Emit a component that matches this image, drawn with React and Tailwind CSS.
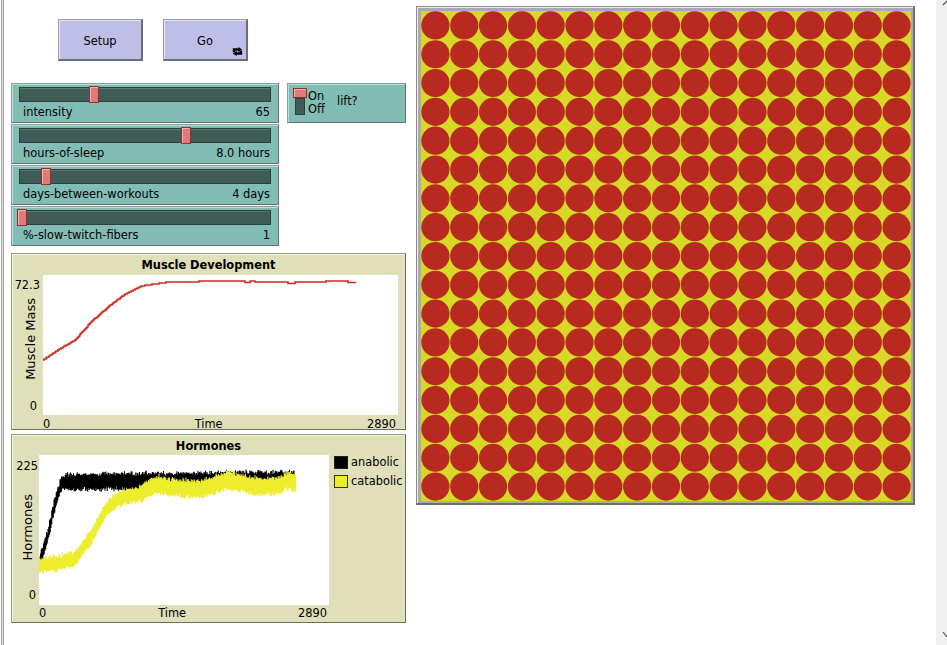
import React from 'react';

const sliders = [
  { name: 'intensity', value: '65', thumb: 'left-[69px]' },
  { name: 'hours-of-sleep', value: '8.0 hours', thumb: 'left-[161px]' },
  { name: 'days-between-workouts', value: '4 days', thumb: 'left-[21px]' },
  { name: '%-slow-twitch-fibers', value: '1', thumb: 'left-[-3px]' },
];

// small seeded random so the noisy plot bands stay the same every render
function rng(seed) {
  let s = seed;
  return () => {
    s = (s * 1664525 + 1013904223) % 4294967296;
    return s / 4294967296;
  };
}

function lerp(table, x) {
  for (let i = 1; i < table.length; i++) {
    if (x <= table[i][0]) {
      const [x0, y0] = table[i - 1];
      const [x1, y1] = table[i];
      return y0 + ((y1 - y0) * (x - x0)) / (x1 - x0);
    }
  }
  return table[table.length - 1][1];
}

const musclePts = [[0, 85], [15, 75], [32, 65], [48, 47], [65, 32], [82, 19], [98, 11], [122, 7.5], [155, 6.5], [196, 6], [313, 6]];
const muscleDips = [[202, 207, 7.5], [212, 245, 7], [245, 252, 8.5], [252, 283, 7], [305, 314, 7.5]];

function musclePath() {
  let prev = 85;
  let d = 'M0 85';
  for (let x = 1; x <= 313; x++) {
    let y = Math.round(lerp(musclePts, x));
    for (const [a, b, v] of muscleDips) if (x >= a && x < b) y = v;
    if (y !== prev) {
      d += ` H${x} V${y}`;
      prev = y;
    }
  }
  return d + ' H313';
}

const blackPts = [[0, 110], [9, 80], [16, 48], [22, 30], [27, 27], [100, 26], [150, 24], [255, 23]];
const yellowPts = [[0, 110], [19, 108], [36, 104], [52, 82], [66, 56], [79, 44], [102, 38], [119, 30], [140, 33], [161, 34], [175, 30], [191, 25], [205, 29], [221, 32], [238, 31], [248, 26], [257, 27]];

function bandPath(table, end, seed, width) {
  const rand = rng(seed);
  let d = '';
  for (let x = 0; x <= end; x += 0.75) {
    const c = lerp(table, x) + (rand() - 0.5) * 3.5;
    const h = width(x) + rand() * 2.5;
    d += `M${x.toFixed(2)} ${(c - h).toFixed(1)}V${(c + h).toFixed(1)}`;
  }
  return d;
}

function Button({ label, forever }) {
  return (
    <div className="relative flex h-[42px] w-[85px] items-center justify-center border border-[#9c9cae] border-r-2 border-b-2 border-r-[#6c6c7c] border-b-[#6c6c7c] bg-[#bebee6] pt-[5px] shadow-[inset_1px_1px_0_#e4e4f6]">
      {label}
      {forever && (
        <svg className="absolute bottom-[3px] right-[3px]" width="11" height="9" viewBox="0 0 11 9">
          <path d="M2 5.2 V2.5 H7" stroke="black" strokeWidth="2.4" fill="none" />
          <path d="M6.3 0 L10.2 2.5 L6.3 5 Z" fill="black" />
          <path d="M9 3.8 V6.5 H4" stroke="black" strokeWidth="2.4" fill="none" />
          <path d="M4.7 4 L0.8 6.5 L4.7 9 Z" fill="black" />
        </svg>
      )}
    </div>
  );
}

function Slider({ name, value, thumb }) {
  return (
    <div className="h-[40px] w-[268px] border border-[#8d9d9a] border-r-[#62726f] border-b-[#62726f] bg-[#82bdb5] px-[7px] pt-[3px] shadow-[inset_1px_1px_0_#b2e0d9]">
      <div className="relative h-[15px] border border-[#2c403c] bg-[#3f5c56] shadow-[inset_0_1px_0_#587770]">
        <div className={`absolute top-[-2px] h-[17px] w-[10px] border border-[#8a3431] bg-[#e07a76] shadow-[inset_1px_1px_0_#f5b1ac] ${thumb}`} />
      </div>
      <div className="mt-[3px] flex justify-between pl-[4px] pr-[1px] leading-[14px]">
        <span>{name}</span>
        <span>{value}</span>
      </div>
    </div>
  );
}

function Switch() {
  return (
    <div className="flex h-[40px] w-[119px] border border-[#8d9d9a] border-r-[#62726f] border-b-[#62726f] bg-[#82bdb5] shadow-[inset_1px_1px_0_#b2e0d9]">
      <div className="ml-[5px] mt-[4px] flex w-[14px] flex-col items-center">
        <div className="h-[10px] w-[14px] border border-[#8a3431] bg-[#e07a76] shadow-[inset_1px_1px_0_#f5b1ac]" />
        <div className="h-[17px] w-[10px] border border-[#2c403c] bg-[#3f5c56]" />
      </div>
      <div className="ml-[1px] mt-[6px] w-[29px] leading-[13px]">
        <div>On</div>
        <div>Off</div>
      </div>
      <div className="mt-[11px] leading-[12px]">lift?</div>
    </div>
  );
}

const plotPanel = 'border border-[#9a9a88] border-r-[#6e6e60] border-b-[#6e6e60] bg-[#dfdfb9] shadow-[inset_1px_1px_0_#f3f3da]';
const vertical = '[writing-mode:vertical-rl] rotate-180 whitespace-nowrap text-[13px] leading-[15px]';

function MusclePlot() {
  return (
    <div className={`ml-[1px] h-[177px] w-[395px] ${plotPanel}`}>
      <div className="h-[21px] pt-[1px] text-center font-bold leading-[21px]">Muscle Development</div>
      <div className="flex h-[140px]">
        <div className="flex w-[31px] flex-col">
          <div className="mt-[4px] pr-[3px] text-right leading-[13px]">72.3</div>
          <div className="flex flex-1 items-center justify-end pb-[14px] pr-[5px]">
            <span className={vertical}>Muscle Mass</span>
          </div>
          <div className="mb-[2px] pr-[6px] text-right leading-[13px]">0</div>
        </div>
        <svg width="355" height="140" className="bg-white">
          <path d={musclePath()} stroke="#d3291f" strokeWidth="1.6" fill="none" />
        </svg>
      </div>
      <div className="flex pl-[31px] pr-[9px] pt-[2px] leading-[14px]">
        <span>0</span>
        <span className="flex-1 text-center">Time</span>
        <span>2890</span>
      </div>
    </div>
  );
}

function HormonePlot() {
  const black = bandPath(blackPts, 255, 11, (x) => (x < 27 ? 5 : x < 120 ? 6.5 : 5));
  const yellow = bandPath(yellowPts, 257, 29, (x) => (x < 100 ? 5.5 : 7));
  return (
    <div className={`ml-[1px] mt-[4px] h-[189px] w-[395px] ${plotPanel}`}>
      <div className="h-[20px] pt-[2px] text-center font-bold leading-[19px]">Hormones</div>
      <div className="flex h-[150px]">
        <div className="flex w-[27px] flex-col">
          <div className="mt-[5px] pr-[1px] text-right leading-[13px]">225</div>
          <div className="flex flex-1 items-center justify-end pb-[8px] pr-[4px]">
            <span className={vertical}>Hormones</span>
          </div>
          <div className="mb-[3px] pr-[3px] text-right leading-[13px]">0</div>
        </div>
        <svg width="290" height="150" className="bg-white">
          <path d={black} stroke="#000" strokeWidth="1.1" />
          <path d={yellow} stroke="#eded2e" strokeWidth="1.1" />
        </svg>
        <div className="ml-[5px] mt-[1px] flex flex-col gap-[6px]">
          <div className="flex items-center gap-[3px]">
            <div className="h-[13px] w-[14px] border border-[#222] bg-black" />
            <span className="leading-[13px]">anabolic</span>
          </div>
          <div className="flex items-center gap-[3px]">
            <div className="h-[13px] w-[14px] border border-[#333] bg-[#eded2e]" />
            <span className="leading-[13px]">catabolic</span>
          </div>
        </div>
      </div>
      <div className="flex w-[317px] pl-[27px] pr-[2px] pt-[1px] leading-[14px]">
        <span>0</span>
        <span className="flex-1 text-center">Time</span>
        <span>2890</span>
      </div>
    </div>
  );
}

function World() {
  const cells = [];
  const size = 490 / 17;
  for (let r = 0; r < 17; r++) {
    for (let c = 0; c < 17; c++) {
      cells.push(
        <circle key={`${r}-${c}`} cx={size * c + size / 2} cy={size * r + size / 2} r="14.1" fill="#b8291f" />
      );
    }
  }
  return (
    <div className="ml-[10px] mt-[6px] self-start border-t border-l border-r-2 border-b-2 border-[#8c8c8c] border-r-[#6e6e6e] border-b-[#6e6e6e]">
      <div className="border-t border-l border-[#ececec]">
        <div className="border-t-[3px] border-l-[3px] border-r-2 border-b-2 border-[#ababab]">
          <svg width="490" height="490" className="block">
            <rect width="490" height="490" fill="#d8d926" />
            {cells}
          </svg>
        </div>
      </div>
    </div>
  );
}

export default function App() {
  return (
    <div className="flex h-[645px] w-[947px] overflow-hidden bg-white font-['DejaVu_Sans',sans-serif] text-[11.4px] text-black">
      <div className="ml-[1px] h-full w-[3px] border-x border-[#a0a0a0] bg-[#e4e4e4]" />

      <div className="ml-[6px] flex w-[396px] flex-col">
        <div className="mt-[19px] flex gap-[20px] pl-[48px]">
          <Button label="Setup" />
          <Button label="Go" forever />
        </div>

        <div className="mt-[22px] flex items-start">
          <div className="ml-[1px] flex flex-col gap-[1px]">
            {sliders.map((s) => (
              <Slider key={s.name} {...s} />
            ))}
          </div>
          <div className="ml-[8px]">
            <Switch />
          </div>
        </div>

        <div className="mt-[7px]">
          <MusclePlot />
          <HormonePlot />
        </div>
      </div>

      <World />

      <div className="flex-1" />
      <div className="relative w-[11px] bg-[#f0f0f0]">
        <svg className="absolute left-0 top-0" width="11" height="645">
          <path d="M7 5 L11 1" stroke="#555" strokeWidth="1.2" />
          <path d="M7 632 L11 637" stroke="#555" strokeWidth="1.2" />
        </svg>
      </div>
    </div>
  );
}
